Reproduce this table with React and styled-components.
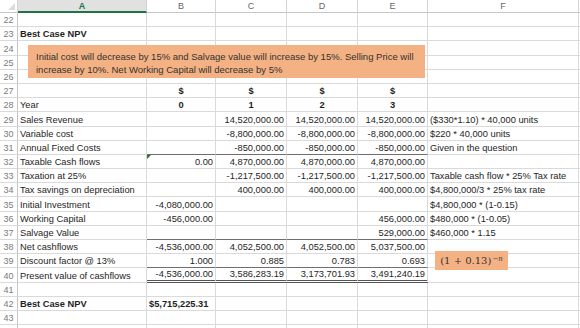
import React from 'react';
import styled, { createGlobalStyle } from 'styled-components';

const Global = createGlobalStyle`
	html, body {
		margin: 0;
		padding: 0;
		background: #ffffff;
	}
	body {
		font-family: 'Liberation Sans', Arial, sans-serif;
		color: #1e1e1e;
		overflow: hidden;
	}
`;

const Page = styled.div`
	position: relative;
	width: 580px;
	height: 328px;
	overflow: hidden;
`;

const Sheet = styled.div`
	display: grid;
	grid-template-columns: 18px 129px 69px 71px 71px 70px 151px 1fr;
	grid-template-rows: 13px;
	grid-auto-rows: 14.2px;
	font-size: 9.3px;
`;

const Corner = styled.div`
	position: relative;
	background: #fff;
	border-right: 1px solid #d4d4d4;
	border-bottom: 1px solid #c6c6c6;
	box-sizing: border-box;
	&::after {
		content: '';
		position: absolute;
		right: 2px;
		bottom: 2px;
		border-left: 7px solid transparent;
		border-bottom: 7px solid #dcdcdc;
	}
`;

const ColHead = styled.div`
	display: flex;
	align-items: center;
	justify-content: center;
	box-sizing: border-box;
	font-size: 9px;
	color: ${(p) => (p.$active ? '#217346' : '#666')};
	font-weight: ${(p) => (p.$active ? 'bold' : 'normal')};
	background: ${(p) => (p.$active ? '#e1e1e1' : '#fff')};
	border-right: 1px solid #d4d4d4;
	border-bottom: ${(p) => (p.$active ? '2px solid #217346' : '1px solid #c6c6c6')};
`;

const RowHead = styled.div`
	display: flex;
	align-items: flex-end;
	justify-content: center;
	padding-bottom: 1px;
	box-sizing: border-box;
	color: #7a7a7a;
	font-size: 9px;
	border-right: 1px solid #c6c6c6;
	border-bottom: 1px solid #dadada;
`;

const lineStyle = {
	single: '1px solid #6f6f6f',
	double: '3px double #555',
};

const Cell = styled.div`
	position: relative;
	display: flex;
	align-items: flex-end;
	justify-content: ${(p) => (p.$align === 'right' ? 'flex-end' : p.$align === 'center' ? 'center' : 'flex-start')};
	padding: 0 2px 1px 2px;
	box-sizing: border-box;
	white-space: nowrap;
	font-weight: ${(p) => (p.$bold ? 'bold' : 'normal')};
	border-right: 1px solid #dadada;
	border-bottom: ${(p) => lineStyle[p.$line] || '1px solid #dadada'};
	${(p) =>
		p.$flag &&
		`&::before {
			content: '';
			position: absolute;
			left: 0;
			top: 0;
			border-top: 4px solid #1e7b34;
			border-right: 4px solid transparent;
		}`}
`;

const Note = styled.div`
	position: absolute;
	left: 28px;
	top: 45px;
	width: 397px;
	height: 33px;
	box-sizing: border-box;
	padding: 5px 2px 5px 8px;
	background: #f4b183;
	color: #333;
	font-size: 9.5px;
	line-height: 13px;
`;

const Formula = styled.div`
	position: absolute;
	left: 435px;
	top: 251px;
	width: 73px;
	height: 19px;
	display: flex;
	align-items: center;
	justify-content: center;
	background: #f4b183;
	color: #333;
	font-family: 'DejaVu Serif', 'Liberation Serif', serif;
	font-size: 10px;
	sup {
		font-size: 7px;
		font-style: italic;
		margin-left: 1px;
		position: relative;
		top: -2px;
	}
`;

const cols = ['A', 'B', 'C', 'D', 'E', 'F', ''];

// [row, label, B, C, D, E, F, opts]
const rows = [
	[22],
	[23, 'Best Case NPV', '', '', '', '', '', { boldA: true }],
	[24],
	[25],
	[26],
	[27, '', '$', '$', '$', '$', '', { head: true }],
	[28, 'Year', '0', '1', '2', '3', '', { head: true }],
	[29, 'Sales Revenue', '', '14,520,000.00', '14,520,000.00', '14,520,000.00', '($330*1.10) * 40,000 units'],
	[30, 'Variable cost', '', '-8,800,000.00', '-8,800,000.00', '-8,800,000.00', '$220 * 40,000 units'],
	[31, 'Annual Fixed Costs', '', '-850,000.00', '-850,000.00', '-850,000.00', 'Given in the question', { line: 'single' }],
	[32, 'Taxable Cash flows', '0.00', '4,870,000.00', '4,870,000.00', '4,870,000.00', '', { flag: true }],
	[33, 'Taxation at 25%', '', '-1,217,500.00', '-1,217,500.00', '-1,217,500.00', 'Taxable cash flow * 25% Tax rate'],
	[34, 'Tax savings on depreciation', '', '400,000.00', '400,000.00', '400,000.00', '$4,800,000/3 * 25% tax rate'],
	[35, 'Initial Investment', '-4,080,000.00', '', '', '', '$4,800,000 * (1-0.15)'],
	[36, 'Working Capital', '-456,000.00', '', '', '456,000.00', '$480,000 * (1-0.05)'],
	[37, 'Salvage Value', '', '', '', '529,000.00', '$460,000 * 1.15', { line: 'single' }],
	[38, 'Net cashflows', '-4,536,000.00', '4,052,500.00', '4,052,500.00', '5,037,500.00', ''],
	[39, 'Discount factor @ 13%', '1.000', '0.885', '0.783', '0.693', '', { line: 'single' }],
	[40, 'Present value of cashflows', '-4,536,000.00', '3,586,283.19', '3,173,701.93', '3,491,240.19', '', { line: 'double' }],
	[41],
	[42, 'Best Case NPV', '$5,715,225.31', '', '', '', '', { boldA: true, boldB: true }],
	[43],
	['', '', '', '', '', '', '', { key: 44 }],
];

const DataRow = ({ row }) => {
	const [num, label = '', b = '', c = '', d = '', e = '', f = '', opts = {}] = row;
	const values = [b, c, d, e];
	return (
		<>
			<RowHead>{num}</RowHead>
			<Cell $bold={opts.boldA}>{label}</Cell>
			{values.map((v, i) => (
				<Cell
					key={i}
					$align={opts.head ? 'center' : opts.boldB && i === 0 ? 'left' : 'right'}
					$bold={opts.head || (opts.boldB && i === 0)}
					$line={opts.line}
					$flag={opts.flag && i === 0}
				>
					{v}
				</Cell>
			))}
			<Cell>{f}</Cell>
			<Cell />
		</>
	);
};

export default function App() {
	return (
		<Page>
			<Global />
			<Sheet>
				<Corner />
				{cols.map((c) => (
					<ColHead key={c || 'G'} $active={c === 'A'}>
						{c}
					</ColHead>
				))}
				{rows.map((r, i) => (
					<DataRow key={i} row={r} />
				))}
			</Sheet>
			<Note>
				Initial cost will decrease by 15% and Salvage value will increase by 15%. Selling Price will increase by
				10%. Net Working Capital will decrease by 5%
			</Note>
			<Formula>
				(1 + 0.13)<sup>−n</sup>
			</Formula>
		</Page>
	);
}
